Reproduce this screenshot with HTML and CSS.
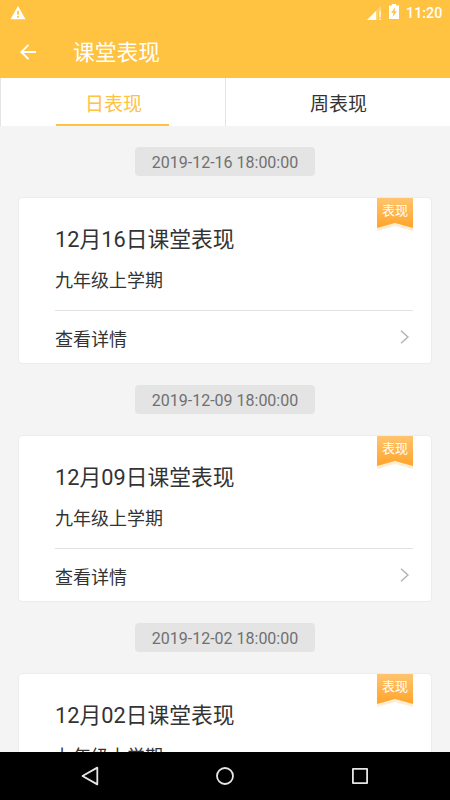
FILE: index.html
```html
<!DOCTYPE html>
<html lang="zh-CN">
<head>
<meta charset="utf-8">
<title>课堂表现</title>
<link rel="stylesheet" href="styles.css">
</head>
<body>
<div class="screen">
  <header class="header">
    <div class="status">
      <svg class="warn" width="16" height="14" viewBox="0 0 16 14"><path fill="#fff" fill-rule="evenodd" d="M8 0 15.500 13.300H.5ZM7.100 4.800v4h1.800v-4ZM7.100 10v1.700h1.800V10Z"/></svg>
      <svg class="signal" width="15" height="15" viewBox="0 0 15 15"><path fill="#fff" opacity=".3" d="M14 0v5h-3v9H0Z"/><path fill="#fff" d="M9 5v9H0ZM12.300 5h1.400v6.500h-1.400ZM12.300 12.500h1.400V14h-1.400Z"/></svg>
      <svg class="battery" width="10" height="15" viewBox="0 0 10 15"><path fill="#fff" fill-rule="evenodd" d="M3 0h4v1.500h3V15H0V1.500h3ZM6.300 3.300 2 8.800h2.500L3.700 12.800 8 7.300H5.500Z"/></svg>
      <span class="clock">11:20</span>
    </div>
    <div class="appbar">
      <svg class="back" width="18" height="18" viewBox="0 0 18 18" fill="none" stroke="#fff" stroke-width="1.900"><path d="M17 9H2.500M9.500 1.800 2.300 9l7.200 7.200"/></svg>
      <h1 class="heading">课堂表现</h1>
    </div>
  </header>
  <nav class="tabs">
    <div class="tab active">日表现</div>
    <div class="tab">周表现</div>
  </nav>
  <main class="list">
    <time class="date">2019-12-16 18:00:00</time>
    <article class="card">
      <h2 class="title">12月16日课堂表现</h2>
      <p class="term">九年级上学期</p>
      <div class="more"><span>查看详情</span><svg class="chevron" width="10" height="14" viewBox="0 0 10 14" fill="none" stroke="#b4b4b4" stroke-width="1.500"><path d="m1 .8 6.900 6.200L1 13.200"/></svg></div>
      <div class="ribbon">表现</div>
    </article>
    <time class="date">2019-12-09 18:00:00</time>
    <article class="card">
      <h2 class="title">12月09日课堂表现</h2>
      <p class="term">九年级上学期</p>
      <div class="more"><span>查看详情</span><svg class="chevron" width="10" height="14" viewBox="0 0 10 14" fill="none" stroke="#b4b4b4" stroke-width="1.500"><path d="m1 .8 6.900 6.200L1 13.200"/></svg></div>
      <div class="ribbon">表现</div>
    </article>
    <time class="date">2019-12-02 18:00:00</time>
    <article class="card">
      <h2 class="title">12月02日课堂表现</h2>
      <p class="term">九年级上学期</p>
      <div class="more"><span>查看详情</span><svg class="chevron" width="10" height="14" viewBox="0 0 10 14" fill="none" stroke="#b4b4b4" stroke-width="1.500"><path d="m1 .8 6.900 6.200L1 13.200"/></svg></div>
      <div class="ribbon">表现</div>
    </article>
  </main>
  <footer class="navbar">
    <svg width="20" height="20" viewBox="0 0 20 20" fill="none" stroke="#e6e6e6" stroke-width="1.800" stroke-linejoin="round"><path d="M17.300 1.600v16.800L2.500 10Z"/></svg>
    <svg width="20" height="20" viewBox="0 0 20 20" fill="none" stroke="#e6e6e6" stroke-width="1.800"><circle cx="10" cy="10" r="8"/></svg>
    <svg width="20" height="20" viewBox="0 0 20 20" fill="none" stroke="#e6e6e6" stroke-width="1.800" stroke-linejoin="round"><path d="M2.900 2.900h14.200v14.200H2.900Z"/></svg>
  </footer>
</div>
</body>
</html>
```

FILE: styles.css
```css
* { box-sizing: border-box; }
body {
  margin: 0;
  font-family: Roboto, "Noto Sans CJK SC", sans-serif;
  color: #333;
}
h1, h2, p { margin: 0; font-weight: 400; }
svg { display: block; flex: none; }
.screen {
  width: 450px;
  height: 800px;
  display: flex;
  flex-direction: column;
  overflow: hidden;
  background: #f4f4f4;
}
.header { flex: none; height: 78px; background: #ffc241; color: #fff; }
.status {
  display: flex;
  align-items: flex-start;
  height: 24px;
  padding: 0 8px 0 10px;
}
.warn { margin-top: 6px; }
.signal { margin: 6px 0 0 auto; }
.battery { margin: 4px 0 0 7px; }
.clock {
  width: 36px;
  margin-left: 7px;
  font-size: 14.300px;
  font-weight: 500;
  line-height: 26px;
}
.appbar { display: flex; align-items: center; height: 54px; padding: 2px 0 0 19px; }
.heading { margin-left: 36px; padding-top: 2px; font-size: 21.750px; line-height: 32px; }
.tabs { display: flex; flex: none; height: 48px; background: #fff; }
.tab {
  flex: 1;
  display: flex;
  justify-content: center;
  padding-left: 1px;
  border-left: 1px solid #e4e4e4;
  font-size: 19px;
  line-height: 54px;
}
.tab.active { color: #ffc241; }
.tab.active::after {
  content: "";
  align-self: flex-end;
  width: 113px;
  height: 2px;
  margin-left: -86px;
  margin-right: -27px;
  background: #ffc241;
}
.list {
  flex: 1;
  min-height: 0;
  overflow: hidden;
  display: flex;
  flex-direction: column;
  align-items: center;
}
.date {
  flex: none;
  width: 180px;
  height: 29px;
  margin-top: 21px;
  border-radius: 4px;
  background: #e4e4e4;
  color: #707070;
  font-size: 16px;
  line-height: 31px;
  text-align: center;
}
.card {
  position: relative;
  flex: none;
  width: 414px;
  height: 167px;
  margin-top: 21px;
  padding: 0 18px 0 36px;
  border: 1px solid #ececec;
  border-radius: 4px;
  background: #fff;
}
.title { margin-top: 26px; font-size: 21.750px; line-height: 32px; }
.term { margin-top: 12px; font-size: 18px; line-height: 26px; }
.more {
  display: flex;
  justify-content: space-between;
  align-items: center;
  height: 53px;
  margin-top: 16px;
  padding: 2px 3px 0 0;
  border-top: 1px solid #e2e2e2;
  font-size: 18px;
}
.chevron { margin-bottom: 2px; }
.ribbon {
  position: absolute;
  top: 0;
  right: 18px;
  width: 36px;
  height: 33px;
  color: #fff;
  font-size: 13px;
  line-height: 25px;
  text-align: center;
  isolation: isolate;
}
.ribbon::before,
.ribbon::after {
  content: "";
  position: absolute;
  inset: 0 0 3px;
  z-index: -1;
  background: linear-gradient(#ffc470, #ffa429);
  clip-path: polygon(0 0, 100% 0, 100% 100%, 50% 83%, 0 100%);
}
.ribbon::before {
  inset: 3px 0 0;
  background: #ffedd2;
}
.navbar {
  flex: none;
  display: flex;
  justify-content: center;
  align-items: center;
  gap: 115px;
  height: 48px;
  background: #000;
}
```
